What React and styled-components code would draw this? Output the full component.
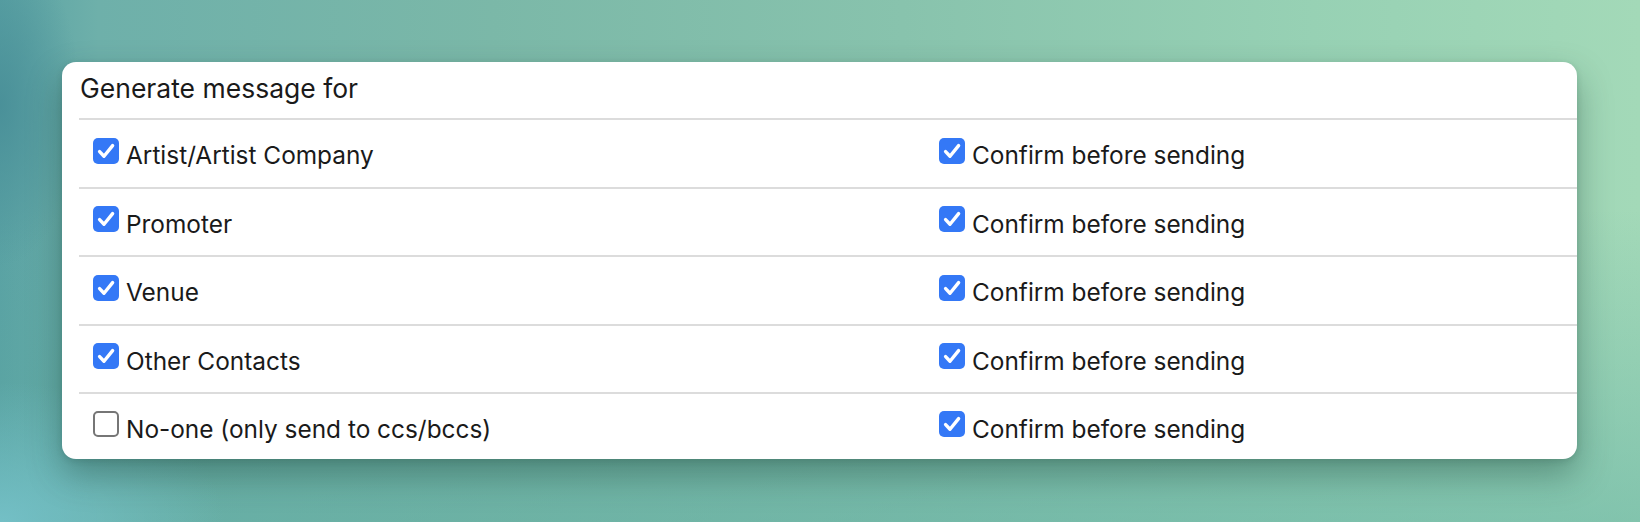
import React from 'react'
import styled, { createGlobalStyle } from 'styled-components'

const GlobalStyle = createGlobalStyle`
    html, body {
        margin: 0;
        padding: 0;
        height: 100%;
    }

    body {
        font-family: Inter, 'Noto Sans', 'Liberation Sans', sans-serif;
        -webkit-font-smoothing: antialiased;
    }
`

const rows = [
    { label: 'Artist/Artist Company', checked: true },
    { label: 'Promoter', checked: true },
    { label: 'Venue', checked: true },
    { label: 'Other Contacts', checked: true },
    { label: 'No-one (only send to ccs/bccs)', checked: false },
]

const Page = styled.div`
    box-sizing: border-box;
    width: 100%;
    height: 522px;
    padding: 62px 63px 0 62px;
    background:
        radial-gradient(ellipse 320px 200px at 0% 100%, rgba(120, 196, 204, 0.85), rgba(120, 196, 204, 0) 70%),
        radial-gradient(ellipse 90px 180px at 0% 20%, rgba(70, 140, 150, 0.8), rgba(70, 140, 150, 0) 90%),
        linear-gradient(to bottom, rgba(0, 0, 0, 0) 40%, rgba(90, 170, 160, 0.45) 100%),
        linear-gradient(to right, #5aa2a4 0%, #6eb0aa 6%, #7bb8a8 30%, #88c3ad 55%, #97d1b4 80%, #a3d9b8 100%);
`

const Card = styled.div`
    background: #fff;
    border-radius: 14px;
    padding-left: 17px;
    overflow: hidden;
    box-shadow: 0 16px 34px rgba(20, 60, 50, 0.38), 0 2px 6px rgba(20, 60, 50, 0.15);
`

const Title = styled.div`
    height: 56px;
    box-sizing: border-box;
    padding: 10px 0 0 1px;
    font-size: 26.5px;
    line-height: 32px;
    color: #1a1a1a;
`

const Row = styled.div`
    display: grid;
    grid-template-columns: 846px 1fr;
    box-sizing: border-box;
    height: ${(props) => (props.$last ? '67px' : '68.5px')};
    border-top: 2px solid #dcdcdc;
`

const Cell = styled.label`
    display: flex;
    align-items: center;
    gap: 7px;
    padding-left: 14px;
    font-size: 24.4px;
    color: #1a1a1a;
`

const Label = styled.span`
    padding-top: 4px;
`

const Box = styled.span`
    box-sizing: border-box;
    flex: none;
    width: 26px;
    height: 26px;
    margin-bottom: 5px;
    border-radius: 5px;
    display: flex;
    align-items: center;
    justify-content: center;
    background: ${(props) => (props.$checked ? '#3478f6' : '#fff')};
    border: ${(props) => (props.$checked ? 'none' : '2px solid #767676')};
`

const Checkbox = ({ checked }) => (
    <Box $checked={checked}>
        {checked && (
            <svg width="26" height="26" viewBox="0 0 26 26">
                <path
                    d="M6.6 13.6 L11 18.2 L19.6 7.6"
                    fill="none"
                    stroke="#fff"
                    strokeWidth="3.4"
                    strokeLinecap="round"
                    strokeLinejoin="round"
                />
            </svg>
        )}
    </Box>
)

export default function App() {
    return (
        <Page>
            <GlobalStyle />
            <Card>
                <Title>Generate message for</Title>
                {rows.map((row, i) => (
                    <Row key={row.label} $last={i === rows.length - 1}>
                        <Cell>
                            <Checkbox checked={row.checked} />
                            <Label>{row.label}</Label>
                        </Cell>
                        <Cell>
                            <Checkbox checked />
                            <Label>Confirm before sending</Label>
                        </Cell>
                    </Row>
                ))}
            </Card>
        </Page>
    )
}
